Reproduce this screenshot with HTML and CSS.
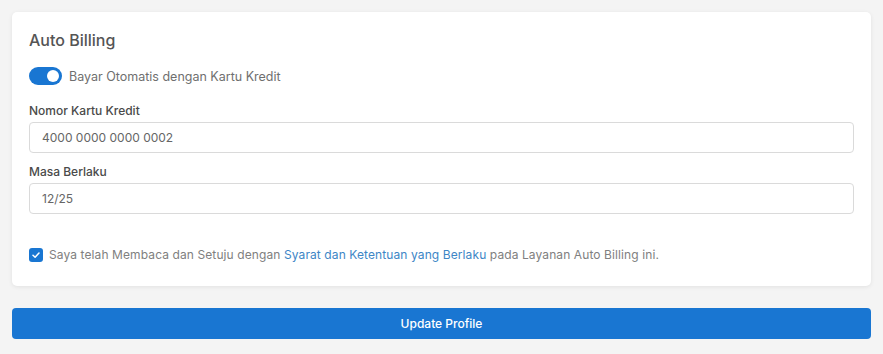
FILE: index.html
```html
<!DOCTYPE html>
<html lang="id">
<head>
<meta charset="utf-8">
<link rel="stylesheet" href="styles.css">
</head>
<body>
<div class="page">
  <section class="card">
    <h2 class="title">Auto Billing</h2>
    <label class="switch-row">
      <span class="switch"><span class="knob"></span></span>
      <span class="switch-label">Bayar Otomatis dengan Kartu Kredit</span>
    </label>
    <div class="field">
      <div class="field-label">Nomor Kartu Kredit</div>
      <div class="input">4000 0000 0000 0002</div>
    </div>
    <div class="field">
      <div class="field-label">Masa Berlaku</div>
      <div class="input">12/25</div>
    </div>
    <div class="agree">
      <span class="check"><svg width="10" height="10" viewBox="0 0 10 10"><path d="M2 5.2 L4.1 7.2 L8 3" fill="none" stroke="#fff" stroke-width="1.5" stroke-linecap="round" stroke-linejoin="round"/></svg></span>
      <span class="agree-text">Saya telah Membaca dan Setuju dengan <a class="link">Syarat dan Ketentuan yang Berlaku</a> pada Layanan Auto Billing ini.</span>
    </div>
  </section>
  <button class="btn">Update Profile</button>
</div>
</body>
</html>
```
FILE: styles.css
```css
* { box-sizing: border-box; }
html, body { margin: 0; padding: 0; }
body {
  background: #f4f4f4;
  font-family: Inter, "Open Sans", sans-serif;
  color: #555;
}
.page {
  padding: 12px 12px 0 12px;
  display: flex;
  flex-direction: column;
  gap: 22px;
}
.card {
  background: #fff;
  border-radius: 5px;
  box-shadow: 0 1px 4px rgba(0,0,0,0.08);
  padding: 17px 17px 24px 17px;
  height: 274px;
}
.title {
  margin: 0;
  font-size: 16px;
  font-weight: 500;
  color: #555;
  line-height: 22px;
}
.switch-row {
  display: flex;
  align-items: center;
  gap: 7px;
  margin-top: 16px;
}
.switch {
  width: 33px;
  height: 18px;
  border-radius: 9px;
  background: #1976d2;
  display: flex;
  align-items: center;
  justify-content: flex-end;
  padding-right: 3px;
}
.knob {
  width: 12px;
  height: 12px;
  border-radius: 50%;
  background: #fff;
}
.switch-label {
  font-size: 12.5px;
  color: #6f6f6f;
}
.field { margin-top: 18px; }
.field + .field { margin-top: 11px; }
.field-label {
  font-size: 12px;
  font-weight: 500;
  color: #4a4a4a;
  line-height: 16px;
  margin-bottom: 3px;
}
.input {
  height: 31px;
  border: 1px solid #dadada;
  border-radius: 4px;
  padding: 0 12px;
  display: flex;
  align-items: center;
  font-size: 12px;
  color: #666;
}
.agree {
  display: flex;
  align-items: center;
  gap: 6px;
  margin-top: 34px;
  height: 14px;
}
.check {
  width: 14px;
  height: 14px;
  border-radius: 3px;
  background: #1976d2;
  display: flex;
  align-items: center;
  justify-content: center;
}
.agree-text {
  font-size: 12px;
  line-height: 14px;
  letter-spacing: 0.1px;
  color: #808080;
}
.link { color: #3d86c6; }
.btn {
  height: 31px;
  border: none;
  border-radius: 4px;
  background: #1976d2;
  color: #fff;
  font-family: inherit;
  font-size: 12px;
  font-weight: 500;
}
```
